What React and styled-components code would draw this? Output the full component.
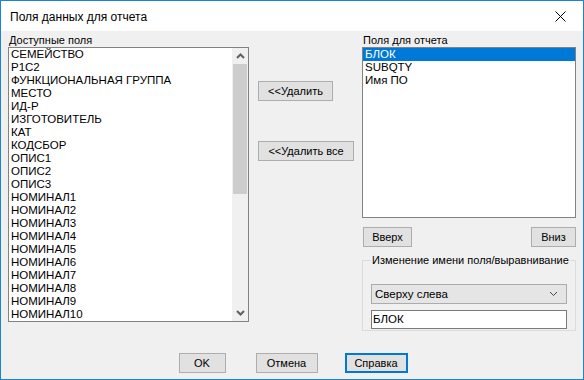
import React from "react"
import styled, { createGlobalStyle } from "styled-components"

const GlobalStyle = createGlobalStyle`
  html, body {
    margin: 0;
    padding: 0;
    background: #f0f0f0;
  }
  * {
    box-sizing: border-box;
  }
`

const availableFields = [
  "СЕМЕЙСТВО",
  "Р1С2",
  "ФУНКЦИОНАЛЬНАЯ ГРУППА",
  "МЕСТО",
  "ИД-Р",
  "ИЗГОТОВИТЕЛЬ",
  "КАТ",
  "КОДСБОР",
  "ОПИС1",
  "ОПИС2",
  "ОПИС3",
  "НОМИНАЛ1",
  "НОМИНАЛ2",
  "НОМИНАЛ3",
  "НОМИНАЛ4",
  "НОМИНАЛ5",
  "НОМИНАЛ6",
  "НОМИНАЛ7",
  "НОМИНАЛ8",
  "НОМИНАЛ9",
  "НОМИНАЛ10",
]

const reportFields = ["БЛОК", "SUBQTY", "Имя ПО"]

// outer dialog frame with the accent border
const Window = styled.div`
  width: 584px;
  height: 380px;
  border: 1px solid #1883d7;
  display: flex;
  flex-direction: column;
  background: #f0f0f0;
  font-family: "Liberation Sans", Arial, sans-serif;
  font-size: 11px;
  color: #000;
`

const TitleBar = styled.div`
  height: 30px;
  flex-shrink: 0;
  background: #fff;
  display: flex;
  align-items: center;
  padding: 0 0 0 9px;
`

const Title = styled.div`
  flex-grow: 1;
  font-size: 12px;
  padding-top: 1px;
`

const CloseButton = styled.div`
  width: 44px;
  height: 30px;
  display: flex;
  align-items: center;
  justify-content: center;
  margin-right: 1px;
`

const Body = styled.div`
  flex-grow: 1;
  display: flex;
  flex-direction: column;
  padding: 3px 6px 6px 7px;
`

const Columns = styled.div`
  display: grid;
  grid-template-columns: 241px 95px 214px;
  column-gap: 9px;
  align-items: start;
  & > :nth-child(2) {
    margin-right: 1px;
  }
`

const Column = styled.div`
  display: flex;
  flex-direction: column;
  align-items: ${props => props.align || "stretch"};
`

const Label = styled.div`
  height: 13px;
  line-height: 13px;
  padding-left: 1px;
`

// white list box with grey frame
const ListBox = styled.div`
  height: ${props => props.height}px;
  border: 1px solid #828282;
  background: #fff;
  display: flex;
  overflow: hidden;
`

const Items = styled.div`
  flex-grow: 1;
  display: flex;
  flex-direction: column;
`

const Item = styled.div`
  height: 13px;
  line-height: 13px;
  padding-left: 2px;
  font-size: 11.5px;
  white-space: nowrap;
  background: ${props => (props.selected ? "#0078d7" : "transparent")};
  color: ${props => (props.selected ? "#fff" : "#000")};
`

const ScrollBar = styled.div`
  width: 16px;
  background: #f0f0f0;
  display: flex;
  flex-direction: column;
`

const ScrollArrow = styled.div`
  height: 16px;
  display: flex;
  align-items: center;
  justify-content: center;
`

const ScrollTrack = styled.div`
  flex-grow: 1;
`

const ScrollThumb = styled.div`
  height: 130px;
  margin: 0 1px;
  background: #cdcdcd;
`

const Button = styled.button`
  width: ${props => props.width}px;
  height: 20px;
  margin: 0;
  margin-top: ${props => props.top || 0}px;
  padding: 0;
  background: #e1e1e1;
  border: ${props => (props.primary ? "2px solid #0078d7" : "1px solid #adadad")};
  font-family: "Liberation Sans", Arial, sans-serif;
  font-size: 11px;
  font-weight: normal;
  color: #000;
`

const ButtonRow = styled.div`
  display: flex;
  justify-content: space-between;
  margin-top: 9px;
  padding-left: 1px;
`

const GroupBox = styled.fieldset`
  margin: 7px 0 0 0;
  padding: 17px 8px 1px 8px;
  min-inline-size: 0;
  border: 1px solid #dcdcdc;
  display: flex;
  flex-direction: column;
  gap: 6px;
`

const GroupLegend = styled.legend`
  margin-left: 0;
  padding: 0 1px;
  height: 13px;
  line-height: 13px;
  font-size: 11px;
  white-space: nowrap;
`

const ComboBox = styled.div`
  height: 20px;
  background: #e5e5e5;
  border: 1px solid #acacac;
  display: flex;
  align-items: center;
  justify-content: space-between;
  padding: 0 8px 0 3px;
  font-size: 11.5px;
`

const TextInput = styled.div`
  height: 19px;
  background: #fff;
  border: 1px solid #7a7a7a;
  line-height: 17px;
  padding-left: 1px;
  font-size: 11.5px;
`

const Footer = styled.div`
  margin-top: auto;
  display: flex;
  justify-content: center;
  gap: 30px;
  padding-left: 1px;
  & > :last-child {
    margin-left: -3px;
  }
`

const Chevron = ({ up, color = "#606060", width = 2 }) => (
  <svg width="9" height="6" viewBox="0 0 9 6">
    <polyline
      points={up ? "1,5 4.5,1.5 8,5" : "1,1 4.5,4.5 8,1"}
      fill="none"
      stroke={color}
      strokeWidth={width}
    />
  </svg>
)

export default function App() {
  return (
    <>
      <GlobalStyle />
      <Window>
        <TitleBar>
          <Title>Поля данных для отчета</Title>
          <CloseButton>
            <svg width="11" height="11" viewBox="0 0 11 11">
              <path d="M0.5 0.5 L10.5 10.5 M10.5 0.5 L0.5 10.5" stroke="#000" strokeWidth="1" />
            </svg>
          </CloseButton>
        </TitleBar>
        <Body>
          <Columns>
            <Column>
              <Label>Доступные поля</Label>
              <ListBox height={275}>
                <Items>
                  {availableFields.map(f => (
                    <Item key={f}>{f}</Item>
                  ))}
                </Items>
                <ScrollBar>
                  <ScrollArrow>
                    <Chevron up />
                  </ScrollArrow>
                  <ScrollThumb />
                  <ScrollTrack />
                  <ScrollArrow>
                    <Chevron />
                  </ScrollArrow>
                </ScrollBar>
              </ListBox>
            </Column>

            <Column align="flex-start">
              <Button width={75} top={47}>&lt;&lt;Удалить</Button>
              <Button width={96} top={40}>&lt;&lt;Удалить все</Button>
            </Column>

            <Column>
              <Label>Поля для отчета</Label>
              <ListBox height={171}>
                <Items>
                  {reportFields.map((f, i) => (
                    <Item key={f} selected={i === 0}>
                      {f}
                    </Item>
                  ))}
                </Items>
              </ListBox>
              <ButtonRow>
                <Button width={49}>Вверх</Button>
                <Button width={45}>Вниз</Button>
              </ButtonRow>
              <GroupBox>
                <GroupLegend>Изменение имени поля/выравнивание</GroupLegend>
                <ComboBox>
                  <span>Сверху слева</span>
                  <Chevron color="#444" width={1} />
                </ComboBox>
                <TextInput>БЛОК</TextInput>
              </GroupBox>
            </Column>
          </Columns>

          <Footer>
            <Button width={47}>OK</Button>
            <Button width={62}>Отмена</Button>
            <Button width={63} primary>
              Справка
            </Button>
          </Footer>
        </Body>
      </Window>
    </>
  )
}
